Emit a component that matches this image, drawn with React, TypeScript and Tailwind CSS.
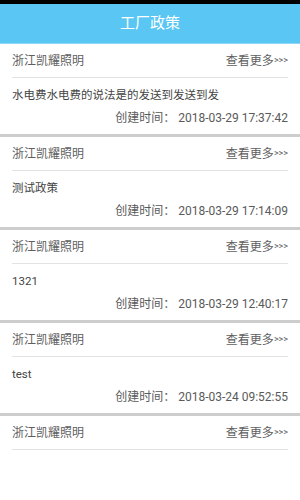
import React from 'react'

const items = [
  { company: '浙江凯耀照明', title: '水电费水电费的说法是的发送到发送到发', time: '2018-03-29 17:37:42' },
  { company: '浙江凯耀照明', title: '测试政策', time: '2018-03-29 17:14:09' },
  { company: '浙江凯耀照明', title: '1321', time: '2018-03-29 12:40:17' },
  { company: '浙江凯耀照明', title: 'test', time: '2018-03-24 09:52:55' },
  { company: '浙江凯耀照明', title: '', time: '' },
]

export default function App() {
  return (
    <main
      className="min-h-[500px] w-[300px] bg-white"
      style={{ fontFamily: 'Roboto, "Noto Sans CJK SC", sans-serif' }}
    >
      <div className="h-[4px] bg-black" />
      <header className="flex h-[40px] items-center justify-center border-b border-[#8fd8f7] bg-[#59c6f3] text-[15px] text-white">
        工厂政策
      </header>
      {items.map((item, i) => (
        <section key={i} className={i > 0 ? 'border-t-[3px] border-[#cdcdcd]' : ''}>
          <div className="mx-3 flex h-[34px] items-center justify-between border-b border-[#e3e3e3] text-[12px] text-[#606060]">
            <span>{item.company}</span>
            <span className="flex items-center">
              查看更多<span className="text-[9px]">&gt;&gt;&gt;</span>
            </span>
          </div>
          {item.time && (
            <div className="px-3 pb-[8px] pt-[8px]">
              <p className="text-[11.5px] leading-[18px] text-[#444]">{item.title}</p>
              <p className="mt-[6px] text-right text-[12px] leading-[16px] text-[#5a5a5a]">
                创建时间： {item.time}
              </p>
            </div>
          )}
        </section>
      ))}
    </main>
  )
}
